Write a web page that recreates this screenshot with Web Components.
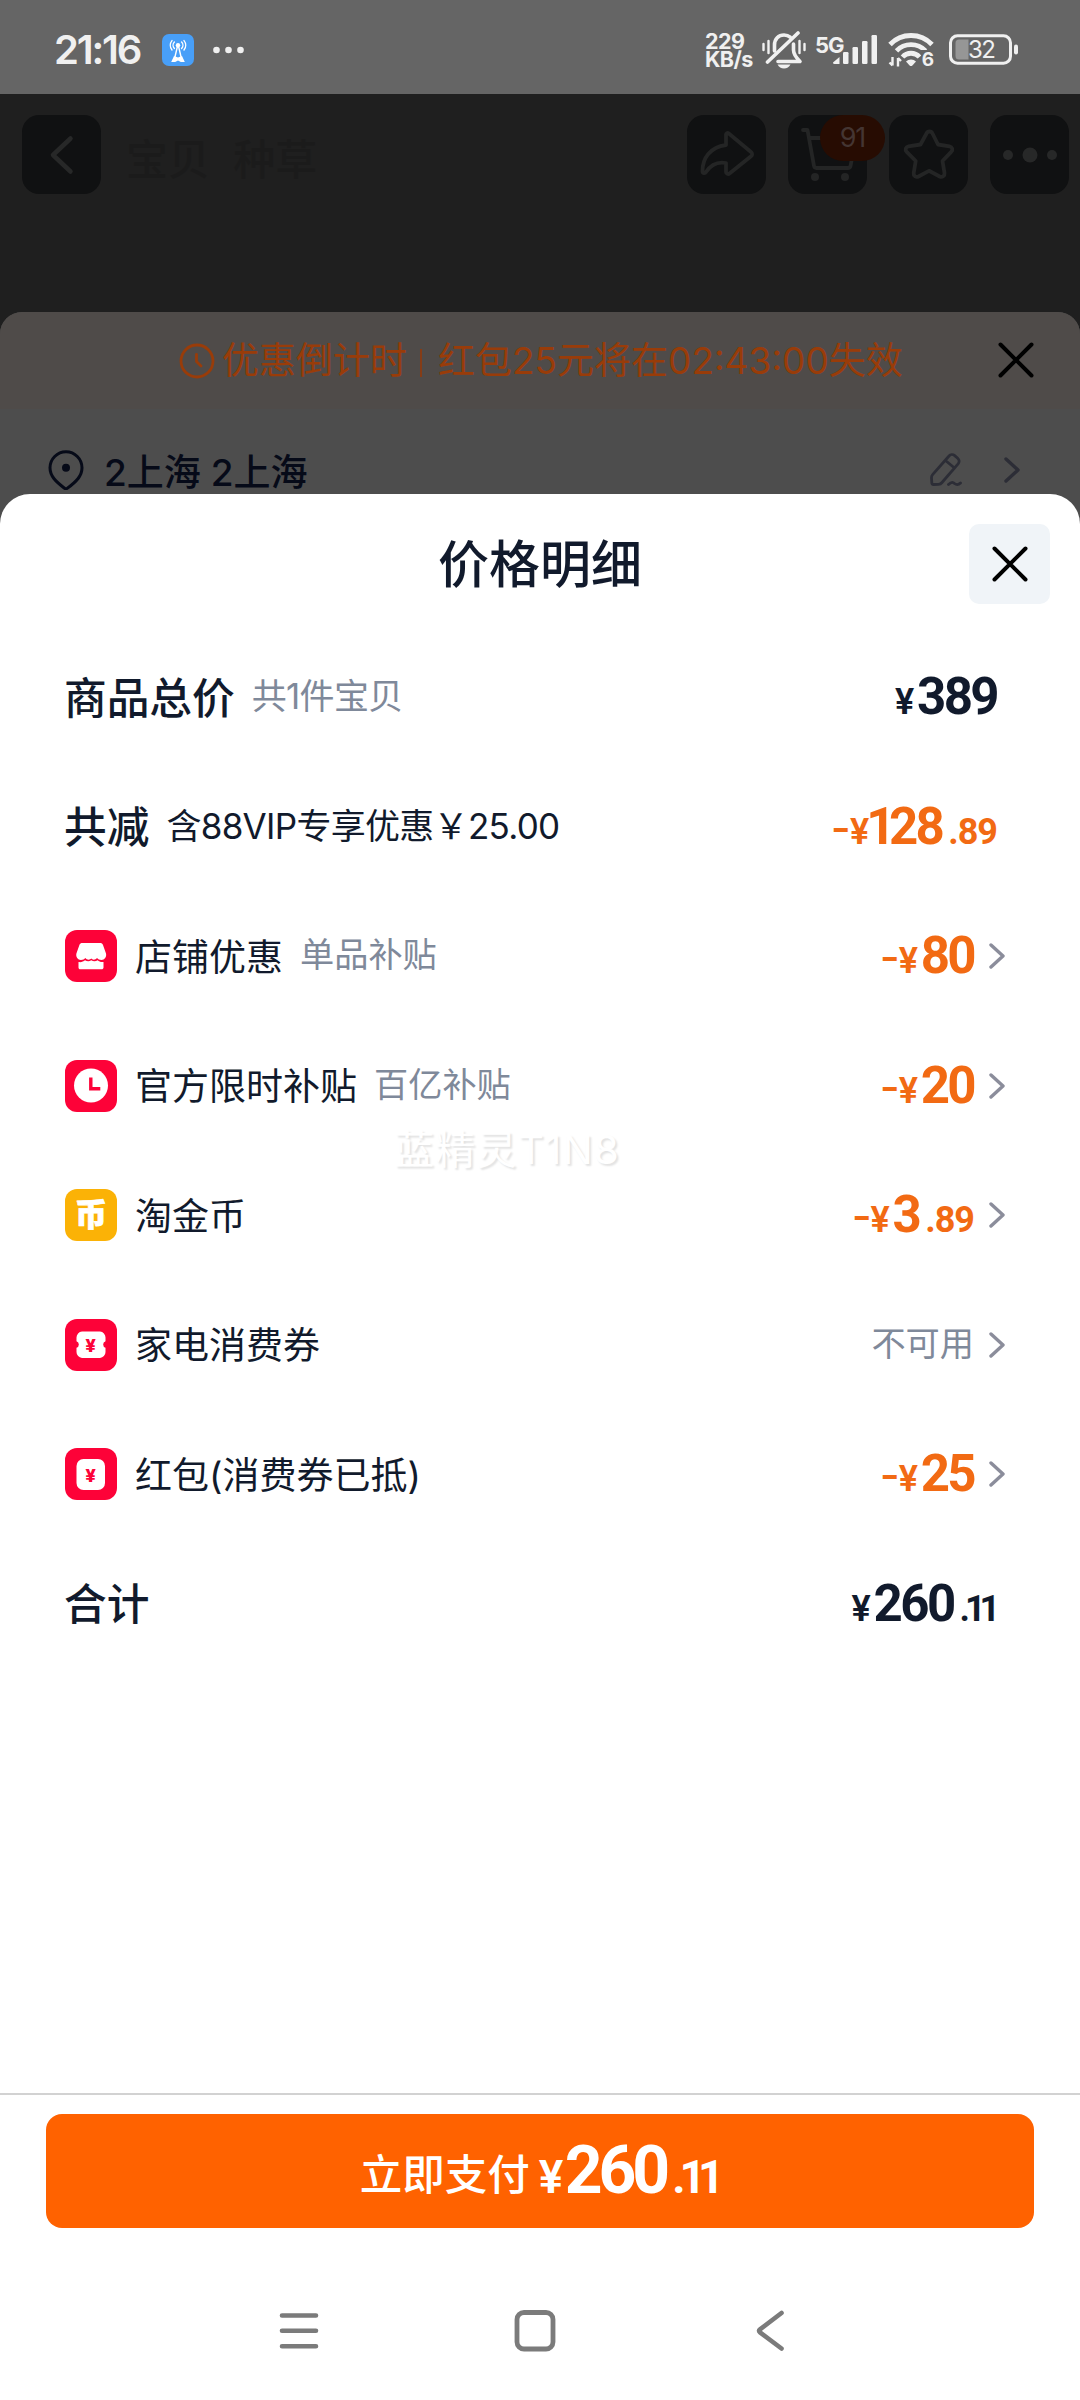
<!DOCTYPE html>
<html lang="zh-CN">
<head>
<meta charset="utf-8">
<title>价格明细</title>
<style>
  body {
    margin: 0;
    width: 1080px;
    height: 2400px;
    overflow: hidden;
    background: #1f1f1f;
    font-family: Inter, "Noto Sans CJK SC", sans-serif;
    color: #111a2c;
  }
</style>
</head>
<body>
<checkout-screen></checkout-screen>

<script>
const icons = {
  tower: `<svg viewBox="0 0 32 32"><rect width="32" height="32" rx="7" fill="#489ff8"/><g fill="none" stroke="#fff" stroke-width="1.4" stroke-linecap="round"><path d="M12.4 14.5a4.6 4.6 0 0 1 0-6.4M19.6 14.5a4.6 4.6 0 0 0 0-6.4M10 16a7.4 7.4 0 0 1 0-9.4M22 16a7.4 7.4 0 0 0 0-9.4M15.3 13l-2.6 11M16.7 13l2.6 11"/></g><circle cx="16" cy="11.3" r="2.2" fill="#fff"/><path d="M12 22l4 1.6 4-1.6 2.8 6h-4l-2.8-1.4-2.8 1.4h-4z" fill="#fff"/></svg>`,
  more: `<svg viewBox="0 0 32 8"><g fill="#f0f0f0"><circle cx="4" cy="4" r="3.3"/><circle cx="16" cy="4" r="3.3"/><circle cx="28" cy="4" r="3.3"/></g></svg>`,
  mute: `<svg viewBox="0 0 44 38"><g fill="none" stroke="#f0f0f0" stroke-width="3.6" stroke-linecap="round" stroke-linejoin="round"><path d="M12.5 20v-6c0-6 4-10 9.5-10 2.4 0 4.6.8 6.2 2.2M31.5 13v6c0 4 2 7 6.5 11.500H16"/><path d="M36 2L5.500 31"/></g><g stroke="#f0f0f0" stroke-width="2.4" stroke-linecap="round"><path d="M1.500 13v6M6.500 10v12M37.500 10v12M42.500 13v6"/></g><path d="M15.500 33.500h13c-1.500 2.600-3.500 3.900-6.500 3.900s-5-1.300-6.500-3.900z" fill="#f0f0f0"/></svg>`,
  signal: `<svg viewBox="0 0 46 30"><g fill="#f0f0f0"><path d="M0 27.500L6.500 22v7H1.500A1.500 1.500 0 0 1 0 27.500z"/><rect x="10" y="17" width="5.5" height="12" rx="1.2"/><rect x="19.5" y="12" width="5.5" height="17" rx="1.2"/><rect x="29" y="6" width="5.5" height="23" rx="1.2"/><rect x="38.5" y="0" width="5.5" height="29" rx="1.2"/></g></svg>`,
  wifi: `<svg viewBox="0 0 48 36"><g fill="none" stroke="#f0f0f0" stroke-width="4.8"><path d="M2 12.500a29 29 0 0 1 42 0M8.500 18.800a20 20 0 0 1 29 0M14.500 25a11.500 11.500 0 0 1 17 0"/></g><path d="M18 29.500a7 7 0 0 1 10 0l-3.600 3.900a2 2 0 0 1-2.800 0z" fill="#f0f0f0"/><path d="M4.500 25v8.500M1.500 30.500l3 3M10 34.500V26M10 26l3 3" fill="none" stroke="#f0f0f0" stroke-width="2.4"/></svg>`,
  battery: `<svg viewBox="0 0 70 32"><rect x="1.5" y="1.8" width="60" height="27.4" rx="7" fill="none" stroke="#f0f0f0" stroke-width="3"/><path d="M10 5.500h9.500v20H10a3.500 3.500 0 0 1-3.500-3.500V9A3.500 3.500 0 0 1 10 5.500z" fill="#969696"/><rect x="65" y="10.5" width="4" height="10" rx="2" fill="#f0f0f0"/></svg>`,
  back: `<svg viewBox="0 0 79 79"><path d="M48.500 23.500L31 40l17.500 16.500" fill="none" stroke="#272828" stroke-width="4.5" stroke-linecap="round" stroke-linejoin="round"/></svg>`,
  share: `<svg viewBox="0 0 79 79"><path d="M39 19.500c0-1.300 1.500-2 2.500-1.200L64 37c1.500 1.300 1.500 3 0 4.200L42.500 58.500c-1.200 1-3.500.2-3.500-1.500v-9c-8-1.500-15 1.500-20 9-1 1.800-3.500 1.300-3.500-.8 0-13 7.500-24 23.500-26.200z" fill="none" stroke="#242525" stroke-width="3.8" stroke-linejoin="round"/></svg>`,
  cart: `<svg viewBox="0 0 79 79"><path d="M15 15h4.500l6.500 36c.3 1.500 1 2 2.500 2H60q2 0 2.500-2L65 38M21 23h12" fill="none" stroke="#242525" stroke-width="3.8" stroke-linecap="round" stroke-linejoin="round"/><circle cx="27" cy="62" r="4" fill="#242525"/><circle cx="57" cy="62" r="4" fill="#242525"/></svg>`,
  star: `<svg viewBox="0 0 79 79"><path d="M37.500 18.500c1.200-2.700 4.800-2.700 6 0l5.500 11 11.500 1.800c2.800.5 3.800 3.600 1.700 5.600L53.500 46l2 12c.4 2.800-2.300 4.800-4.800 3.500L40 55.800l-10.500 5.700c-2.500 1.300-5.200-.7-4.800-3.500l2-12-9-9.100c-2-2-1-5.100 1.800-5.600L31.500 29.500z" fill="none" stroke="#242525" stroke-width="3.8" stroke-linejoin="round"/></svg>`,
  dots: `<svg viewBox="0 0 79 79"><g fill="#272828"><circle cx="18" cy="40" r="5"/><circle cx="40" cy="40" r="7.5"/><circle cx="62" cy="40" r="5"/></g></svg>`,
  timer: `<svg viewBox="0 0 36 36"><g fill="none" stroke="#993c09" stroke-width="2.8" stroke-linecap="round" stroke-linejoin="round"><circle cx="18" cy="18" r="16"/><path d="M17.500 11.500v7l4.500 4.500"/></g></svg>`,
  close: `<svg viewBox="0 0 36 36"><path d="M2.500 2.500l31 31M33.500 2.500l-31 31" fill="none" stroke="#000" stroke-width="4" stroke-linecap="round"/></svg>`,
  pin: `<svg viewBox="0 0 36 40"><path d="M18 1.800A16 16 0 0 0 2 17.800c0 8.200 5.500 13.500 14.500 20.400a2.400 2.400 0 0 0 3 0C28.500 31.300 34 26 34 17.800A16 16 0 0 0 18 1.800z" fill="none" stroke="#060a18" stroke-width="3"/><circle cx="18" cy="17.800" r="4" fill="#060a18"/></svg>`,
  edit: `<svg viewBox="0 0 32 34"><g fill="none" stroke="#2c2d36" stroke-width="2.8" stroke-linejoin="round" stroke-linecap="round"><path d="M19 3c1.500-1.800 4-1.800 5.700-.4l3 2.600c1.700 1.500 1.900 4 .4 5.700L12 29.500a5 5 0 0 1-3.500 1.800L3.500 31.500c-1 0-1.700-.7-1.700-1.700L1.500 25a5 5 0 0 1 1.300-3.600zM15.500 7.500l9 7.500"/><path d="M18.500 31.500c3-3 4.500-2.500 6-1 1.500 1.200 4 1.500 6-.5"/></g></svg>`,
  chevron: `<svg viewBox="0 0 16 26"><path d="M2 2l12 11L2 24" fill="none" stroke="currentColor" stroke-width="3.4" stroke-linecap="round" stroke-linejoin="round"/></svg>`,
  shop: `<svg viewBox="0 0 52 52"><rect width="52" height="52" rx="12" fill="#fd0238"/><path d="M17.500 13h17.500c1.500 0 2.400.6 3 2l3 8.500c.8 3.500-1.500 6.500-4.500 6.500-2 0-3.500-1-4.500-2-1.500 2-4.500 2.200-5.800.5-1.300 1.700-4.500 1.500-5.800-.5-1 1-2.500 2-4.500 2-3 0-5.300-3-4.500-6.500l3-8.500c.6-1.400 1.500-2 3.100-2z" fill="#fff"/><path d="M13.500 32c2.500.5 5-.3 6.500-1.700 2 1.300 4.500 1.300 6.300 0 1.800 1.300 4.300 1.300 6.300 0 1.500 1.400 3.500 2 5.900 1.700v5.500c0 1-.8 1.800-1.800 1.800H15.300c-1 0-1.800-.8-1.800-1.800z" fill="#fff"/></svg>`,
  clock: `<svg viewBox="0 0 52 52"><rect width="52" height="52" rx="12" fill="#fd0238"/><circle cx="26" cy="25.500" r="17" fill="#fff"/><path d="M25.800 17.500v11.300h9.500" fill="none" stroke="#fd0238" stroke-width="3.4"/></svg>`,
  coin: `<svg viewBox="0 0 52 52"><rect width="52" height="52" rx="12" fill="#fbb206"/><text x="26" y="37" text-anchor="middle" font-family="Noto Sans CJK SC" font-weight="900" font-size="32" fill="#fff" stroke="#fff" stroke-width=".8" stroke-linejoin="round">币</text></svg>`,
  coupon: `<svg viewBox="0 0 52 52"><rect width="52" height="52" rx="12" fill="#fd0238"/><path d="M17 12.500h18a6 6 0 0 1 5.500 6v3.700a3.500 3.500 0 0 0 0 6.600v4.200a6 6 0 0 1-5.500 6H17a6 6 0 0 1-5.500-6v-4.200a3.500 3.500 0 0 0 0-6.600v-3.700a6 6 0 0 1 5.500-6z" fill="#fff"/><text x="25.700" y="33" text-anchor="middle" font-family="Roboto" font-weight="900" font-size="19" fill="#fd0238">¥</text></svg>`,
  packet: `<svg viewBox="0 0 52 52"><rect width="52" height="52" rx="12" fill="#fd0238"/><rect x="11.500" y="11" width="28.500" height="31" rx="7" fill="#fff"/><text x="25.700" y="33.500" text-anchor="middle" font-family="Roboto" font-weight="900" font-size="19" fill="#fd0238">¥</text></svg>`,
  navMenu: `<svg viewBox="0 0 42 42"><path d="M4 5.500h34M4 20.800h34M4 36.200h34" stroke="#7b7b7b" stroke-width="4.600" stroke-linecap="round"/></svg>`,
  navHome: `<svg viewBox="0 0 42 42"><rect x="3" y="2.500" width="36" height="36.500" rx="7" fill="none" stroke="#7b7b7b" stroke-width="4.8"/></svg>`,
  navBack: `<svg viewBox="0 0 42 42"><path d="M31.500 3L10 19.300q-2 1.500 0 3L31.500 38.500" fill="none" stroke="#7b7b7b" stroke-width="4.6" stroke-linecap="round"/></svg>`
}

function define(name, html, setup) {
  const template = document.createElement("template")
  template.innerHTML = html
  customElements.define(name, class extends HTMLElement {
    constructor() {
      super()
      this.attachShadow({ mode: "open" }).append(template.content.cloneNode(true))
    }

    connectedCallback() {
      if (setup) setup(this, this.shadowRoot)
    }
  })
}

define("ui-icon", `
  <style>
    :host { display: block; flex: none; }
    span { display: block; width: 100%; height: 100%; }
    svg { display: block; width: 100%; height: 100%; }
  </style>
  <span></span>
`, (host, root) => {
  host.style.width = host.getAttribute("w") + "px"
  host.style.height = (host.getAttribute("h") || host.getAttribute("w")) + "px"
  root.querySelector("span").innerHTML = icons[host.getAttribute("name")] || ""
})

// Amount split into sign, currency, integer and decimals, all on one baseline.
// Runs of the digit 1 are set tighter than the others.
define("price-text", `
  <style>
    :host {
      display: flex;
      align-items: baseline;
      font-family: Roboto, sans-serif;
      font-weight: 700;
      line-height: 1;
      white-space: nowrap;
      --small: 36px;
      --big: 51px;
    }
    .sign { width: 19px; font-size: var(--small); transform: translateY(-3px) scaleX(1.4); transform-origin: left; }
    .yen, .dec { font-size: var(--small); letter-spacing: -1px; }
    .yen { width: var(--yen, 22px); font-weight: 600; }
    .int { font-size: var(--big); letter-spacing: var(--track, -2.6px); }
    .dec { margin-left: 6px; }
    i { font-style: normal; margin-left: -.11em; letter-spacing: -.17em; }
    .int i { letter-spacing: -.13em; }
    .dec i { margin-right: .08em; }
    [hidden] { display: none; }
  </style>
  <span class="sign">-</span><span class="yen">¥</span><span class="int"></span><span class="dec"></span>
`, (host, root) => {
  const [int, dec] = host.getAttribute("value").split(".")
  const tighten = digits => digits.replace(/1+/g, "<i>$&</i>")
  root.querySelector(".sign").hidden = !host.hasAttribute("minus")
  root.querySelector(".int").innerHTML = tighten(int)
  root.querySelector(".dec").innerHTML = dec ? "." + tighten(dec) : ""
  root.querySelector(".dec").hidden = !dec
})

define("status-bar", `
  <style>
    :host {
      display: flex;
      align-items: center;
      height: 94px;
      box-sizing: border-box;
      padding: 6px 61px 0 54px;
      background: #656565;
      color: #f0f0f0;
    }
    .time { width: 108px; font-size: 40px; font-weight: 600; line-height: 44px; letter-spacing: -2.2px; }
    .more { margin-left: 18px; }
    .gap { flex: 1; }
    .speed { width: 57px; font-size: 21.5px; font-weight: 700; line-height: 18.5px; letter-spacing: -.6px; white-space: nowrap; }
    .speed span { display: block; }
    .net { display: flex; width: 73px; margin-left: 9px; }
    .net b { width: 18px; font-size: 22px; line-height: 20px; font-weight: 700; letter-spacing: -1px; }
    .wifi { position: relative; }
    .wifi b { position: absolute; right: 2px; bottom: -2px; font-size: 19px; line-height: 20px; padding-left: 1px; background: #656565; }
    .battery { position: relative; margin-left: 13px; }
    .battery span { position: absolute; left: 19px; top: 5px; font-size: 24px; line-height: 22px; letter-spacing: -1.5px; }
  </style>
  <span class="time">21:16</span>
  <ui-icon name="tower" w="32"></ui-icon>
  <ui-icon class="more" name="more" w="33" h="8"></ui-icon>
  <span class="gap"></span>
  <span class="speed"><span>229</span><span>KB/s</span></span>
  <ui-icon name="mute" w="44" h="38"></ui-icon>
  <span class="net"><b>5G</b><ui-icon name="signal" w="46" h="30"></ui-icon></span>
  <span class="wifi"><ui-icon name="wifi" w="48" h="36"></ui-icon><b>6</b></span>
  <span class="battery"><ui-icon name="battery" w="70" h="32"></ui-icon><span>32</span></span>
`)

define("nav-tile", `
  <style>
    :host { display: block; position: relative; width: 79px; height: 79px; border-radius: 17px; background: #101112; }
    .badge {
      position: absolute;
      left: 32px;
      top: 0;
      width: 65px;
      height: 46px;
      border-radius: 23px;
      background: #270c02;
      color: #443532;
      font-size: 27px;
      line-height: 46px;
      letter-spacing: -1px;
      text-align: center;
    }
  </style>
`, (host, root) => {
  const icon = document.createElement("ui-icon")
  icon.setAttribute("name", host.getAttribute("icon"))
  icon.setAttribute("w", "79")
  root.append(icon)
  if (host.hasAttribute("badge")) {
    const badge = document.createElement("span")
    badge.className = "badge"
    badge.textContent = host.getAttribute("badge")
    root.append(badge)
  }
})

define("item-header", `
  <style>
    :host { display: flex; height: 218px; box-sizing: border-box; padding: 21px 11px 0 22px; }
    .tabs { flex: 1; padding: 20px 0 0 25px; font-size: 42px; line-height: 50px; font-weight: 500; color: #1b1b1b; word-spacing: 12px; }
    .actions { display: flex; gap: 22px; }
  </style>
  <nav-tile icon="back"></nav-tile>
  <span class="tabs">宝贝 种草</span>
  <div class="actions">
    <nav-tile icon="share"></nav-tile>
    <nav-tile icon="cart" badge="91"></nav-tile>
    <nav-tile icon="star"></nav-tile>
    <nav-tile icon="dots"></nav-tile>
  </div>
`)

define("order-sheet", `
  <style>
    :host { display: block; height: 222px; border-radius: 22px 22px 0 0; background: #4d4d4d; overflow: hidden; }
    .banner {
      display: flex;
      align-items: center;
      height: 97px;
      padding: 0 46px 0 179px;
      background: #4f4b49;
      color: #993c09;
      font-size: 37px;
      line-height: 44px;
      white-space: nowrap;
    }
    .banner ui-icon { margin-right: 7px; }
    .bar { width: 2px; height: 28px; margin: 5px 16px 0 13px; background: #853c16; }
    .banner ui-icon.close { margin: 0 0 2px auto; }
    .address { display: flex; align-items: center; height: 122px; padding: 0 60px 0 48px; font-size: 37px; font-weight: 500; color: #060a18; }
    .address span { flex: 1; padding-left: 20px; }
    .address .arrow { margin-left: 42px; color: #2c2d36; }
  </style>
  <div class="banner">
    <ui-icon name="timer" w="36"></ui-icon>
    <span>优惠倒计时</span><i class="bar"></i><span>红包25元将在02:43:00失效</span>
    <ui-icon class="close" name="close" w="36"></ui-icon>
  </div>
  <div class="address">
    <ui-icon name="pin" w="36" h="40"></ui-icon>
    <span>2上海 2上海</span>
    <ui-icon name="edit" w="32" h="34"></ui-icon>
    <ui-icon class="arrow" name="chevron" w="16" h="26"></ui-icon>
  </div>
`)

define("price-row", `
  <style>
    :host { display: flex; align-items: center; box-sizing: border-box; padding: 0 75px 0 65px; white-space: nowrap; }
    ui-icon.lead { margin: 0 18px 3px 0; }
    .label { font-size: 37px; line-height: 50px; }
    .note { margin: 0 0 5px 17px; font-size: 34.2px; line-height: 46px; color: #7f899a; }
    .end { display: flex; align-items: center; margin-left: auto; padding-right: 8px; }
    .end ::slotted(*) { margin-bottom: 4px; }
    .arrow { margin: 0 0 3px 15px; color: #8b8d9b; }
    :host([strong]) { padding-left: 64px; }
    :host([strong]) .label { font-size: 42.7px; font-weight: 500; }
    :host([strong]) .note { font-size: 35px; letter-spacing: -.7px; }
    :host([dark]) .note { color: #111a2c; }
    :host([link]) .end { padding-right: 0; }
    [hidden] { display: none; }
  </style>
  <span class="label"></span>
  <span class="note"></span>
  <span class="end"><slot></slot></span>
`, (host, root) => {
  const label = root.querySelector(".label")
  const note = root.querySelector(".note")
  label.textContent = host.getAttribute("label")
  note.textContent = host.getAttribute("note")
  note.hidden = !host.hasAttribute("note")
  if (host.hasAttribute("icon")) {
    label.insertAdjacentHTML("beforebegin", `<ui-icon class="lead" name="${host.getAttribute("icon")}" w="52"></ui-icon>`)
  }
  if (host.hasAttribute("link")) {
    root.querySelector(".end").insertAdjacentHTML("beforeend", `<ui-icon class="arrow" name="chevron" w="16" h="26"></ui-icon>`)
  }
})

define("price-sheet", `
  <style>
    :host { display: flex; flex-direction: column; position: relative; height: 1906px; margin-top: -40px; border-radius: 30px 30px 0 0; background: #fff; }
    header { display: grid; grid-template-columns: 111px 1fr 111px; align-items: center; height: 140px; }
    h2 { margin: 0; padding-top: 2px; font-size: 51px; line-height: 60px; font-weight: 500; text-align: center; }
    .close { display: grid; place-items: center; width: 81px; height: 80px; border-radius: 10px; background: #f0f4f8; }
    .rows { display: grid; grid-auto-rows: 129.5px; }
    .off { color: #f26a13; }
    .none { font-size: 34.2px; line-height: 44px; color: #7f899a; }
    .mark {
      position: absolute;
      left: 394px;
      top: 631px;
      font-size: 40px;
      line-height: 50px;
      letter-spacing: 1.3px;
      color: #fff;
      text-shadow: 2px 2px 2px #e2e2e2;
    }
  </style>
  <header><span></span><h2>价格明细</h2><span class="close"><ui-icon name="close" w="36"></ui-icon></span></header>
  <div class="rows">
    <price-row strong label="商品总价" note="共1件宝贝"><price-text value="389"></price-text></price-row>
    <price-row strong dark label="共减" note="含88VIP专享优惠￥25.00"><price-text class="off" minus value="128.89"></price-text></price-row>
    <price-row link icon="shop" label="店铺优惠" note="单品补贴"><price-text class="off" minus value="80"></price-text></price-row>
    <price-row link icon="clock" label="官方限时补贴" note="百亿补贴"><price-text class="off" minus value="20"></price-text></price-row>
    <price-row link icon="coin" label="淘金币"><price-text class="off" minus value="3.89"></price-text></price-row>
    <price-row link icon="coupon" label="家电消费券"><span class="none">不可用</span></price-row>
    <price-row link icon="packet" label="红包(消费券已抵)"><price-text class="off" minus value="25"></price-text></price-row>
    <price-row strong label="合计"><price-text value="260.11"></price-text></price-row>
  </div>
  <span class="mark">蓝精灵T1N8</span>
  <slot></slot>
`)

define("pay-bar", `
  <style>
    :host { display: block; margin-top: auto; height: 175px; border-top: 2px solid #d2d2d2; box-sizing: border-box; padding: 19px 46px 0; }
    .button {
      display: flex;
      align-items: baseline;
      justify-content: center;
      height: 114px;
      box-sizing: border-box;
      padding-top: 21px;
      border-radius: 16px;
      background: #ff6200;
      color: #fff;
      font-size: 42.5px;
      font-weight: 500;
    }
    price-text { --small: 46px; --big: 66px; --yen: 26px; --track: -4px; margin-left: 9px; transform: translateY(3px); }
  </style>
  <div class="button"><span>立即支付</span><price-text value="260.11"></price-text></div>
`)

define("system-nav", `
  <style>
    :host { display: flex; justify-content: center; gap: 194px; height: 132px; box-sizing: border-box; padding: 42px 10px 0 0; }
  </style>
  <ui-icon name="navMenu" w="42"></ui-icon>
  <ui-icon name="navHome" w="42"></ui-icon>
  <ui-icon name="navBack" w="42"></ui-icon>
`)

define("checkout-screen", `
  <style>
    :host { display: block; width: 1080px; height: 2400px; background: #1f1f1f; }
  </style>
  <status-bar></status-bar>
  <item-header></item-header>
  <order-sheet></order-sheet>
  <price-sheet>
    <pay-bar></pay-bar>
    <system-nav></system-nav>
  </price-sheet>
`)
</script>
</body>
</html>
